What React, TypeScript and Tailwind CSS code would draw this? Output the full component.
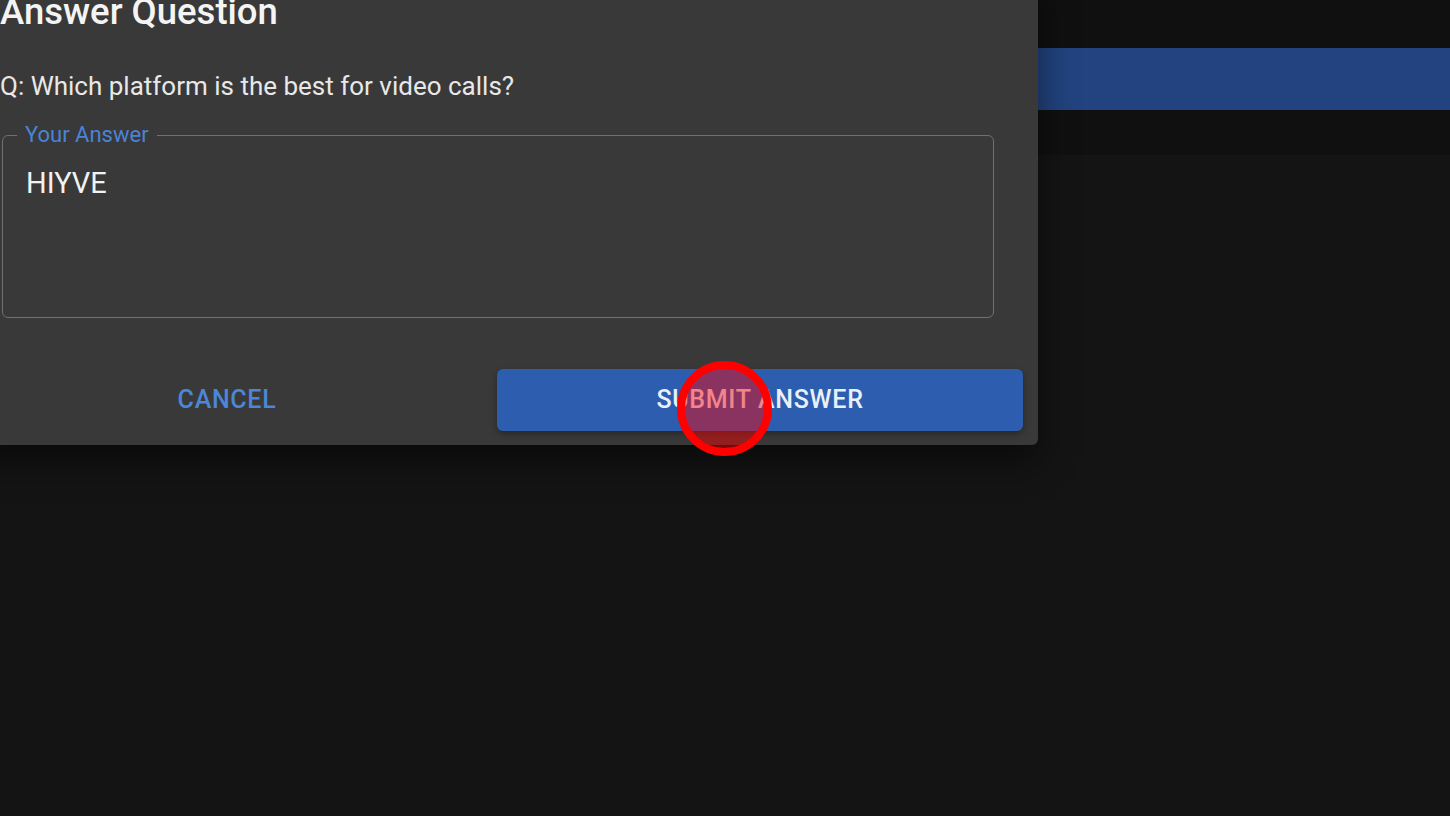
import React from 'react';

const font = { fontFamily: 'Roboto, "Liberation Sans", sans-serif' };

function ClickMarker() {
  return (
    <div className="absolute left-[677px] top-[361px] w-[95px] h-[95px] rounded-full border-[8px] border-[#ff0000] bg-[#ff0000]/45 pointer-events-none" />
  );
}

export default function App() {
  return (
    <div className="relative w-[1450px] h-[816px] overflow-hidden bg-[#141414]" style={font}>
      {/* App behind the dialog */}
      <div className="flex flex-col">
        <div className="h-[48px] bg-[#101010]" />
        <div className="h-[62px] bg-[#22437f]" />
        <div className="h-[45px] bg-[#101010]" />
      </div>

      {/* Dialog */}
      <div className="absolute left-[-36px] top-[-36px] w-[1074px] rounded-[6px] bg-[#393939] shadow-[0_16px_36px_rgba(0,0,0,0.5)] flex flex-col">
        <h2 className="px-[36px] pt-[24px] text-[36.5px] leading-[48px] font-medium text-[#f4f4f4]">
          Answer Question
        </h2>

        <div className="pl-[36px] pt-[32px]">
          <p className="text-[26px] leading-[36px] text-[#e8e8e8]">
            Q: Which platform is the best for video calls?
          </p>

          <fieldset className="mt-[20px] ml-[2px] w-[992px] h-[194px] rounded-[6px] border border-[#707070] px-[14px] pt-0">
            <legend className="px-[8px] text-[22px] leading-[22px] text-[#4b83d6]">Your Answer</legend>
            <div className="pt-[19px] pl-[9px] text-[29px] leading-[36px] text-[#f2f2f2]">HIYVE</div>
          </fieldset>
        </div>

        <div className="flex justify-end gap-[12px] pr-[15px] pt-[51px] pb-[14px]">
          <button className="w-[516px] h-[62px] text-[25px] font-medium tracking-[0.7px] text-[#4b86d8]">
            CANCEL
          </button>
          <button className="w-[526px] h-[62px] rounded-[6px] bg-[#2c5dae] text-[25px] font-medium tracking-[0.7px] text-[#e8f0fb] shadow-[0_3px_6px_rgba(0,0,0,0.3)]">
            SUBMIT ANSWER
          </button>
        </div>
      </div>

      <ClickMarker />
    </div>
  );
}
